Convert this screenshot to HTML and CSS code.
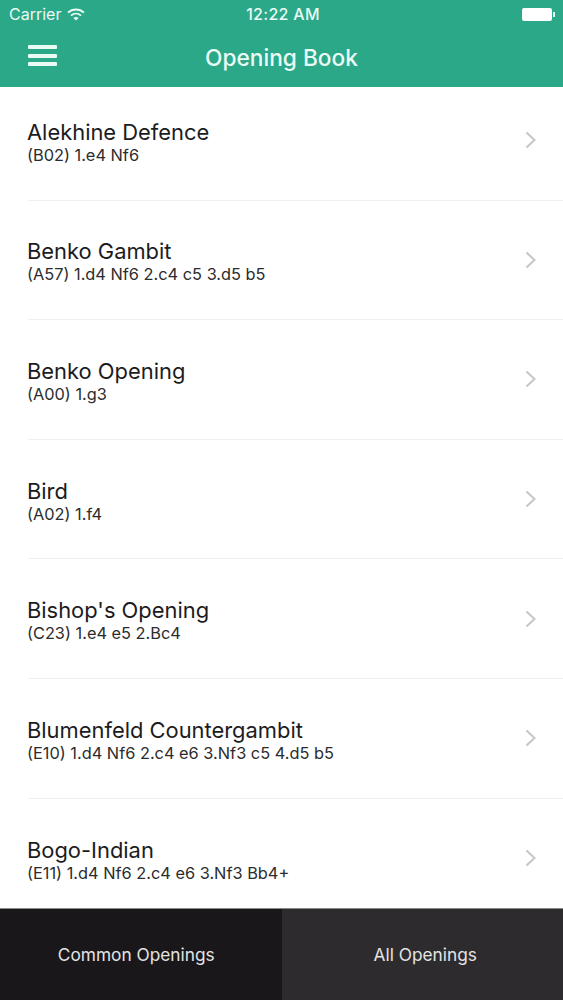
FILE: index.html
```html
<!DOCTYPE html>
<html>
  <head>
    <meta charset="utf-8" />
    <meta name="viewport" content="width=device-width, initial-scale=1.0" />
    <title>Opening Book</title>
    <link rel="stylesheet" href="styles.css">
  </head>
  <body>
    <div class="app">
      <div class="header">
        <div class="status-bar">
          <div class="status-left">
            <span>Carrier</span>
            <svg class="wifi" viewBox="0 0 18 13" width="18" height="13">
              <path d="M1 4.6C5.6 .4 12.4 .4 17 4.6" fill="none" stroke="#eafaf5" stroke-width="1.9"/>
              <path d="M4 7.6C6.9 5 11.1 5 14 7.6" fill="none" stroke="#eafaf5" stroke-width="1.9"/>
              <path d="M6.4 10C8 8.6 10 8.6 11.6 10L9 12.6Z" fill="#eafaf5"/>
            </svg>
          </div>
          <div class="status-time">12:22 AM</div>
          <div class="battery"><span class="battery-body"></span><span class="battery-tip"></span></div>
        </div>
        <div class="nav-bar">
          <div class="menu-icon"><span></span><span></span><span></span></div>
          <div class="nav-title">Opening Book</div>
        </div>
      </div>

      <div class="list">
        <div class="row">
          <div class="row-text">
            <div class="row-title">Alekhine Defence</div>
            <div class="row-moves">(B02) 1.e4 Nf6</div>
          </div>
          <svg class="chevron" viewBox="0 0 11 18" width="11" height="18"><path d="M1.5 1.5L9.5 9l-8 7.5" fill="none" stroke="#c8c8c8" stroke-width="2.2"/></svg>
        </div>
        <div class="row">
          <div class="row-text">
            <div class="row-title">Benko Gambit</div>
            <div class="row-moves">(A57) 1.d4 Nf6 2.c4 c5 3.d5 b5</div>
          </div>
          <svg class="chevron" viewBox="0 0 11 18" width="11" height="18"><path d="M1.5 1.5L9.5 9l-8 7.5" fill="none" stroke="#c8c8c8" stroke-width="2.2"/></svg>
        </div>
        <div class="row">
          <div class="row-text">
            <div class="row-title">Benko Opening</div>
            <div class="row-moves">(A00) 1.g3</div>
          </div>
          <svg class="chevron" viewBox="0 0 11 18" width="11" height="18"><path d="M1.5 1.5L9.5 9l-8 7.5" fill="none" stroke="#c8c8c8" stroke-width="2.2"/></svg>
        </div>
        <div class="row">
          <div class="row-text">
            <div class="row-title">Bird</div>
            <div class="row-moves">(A02) 1.f4</div>
          </div>
          <svg class="chevron" viewBox="0 0 11 18" width="11" height="18"><path d="M1.5 1.5L9.5 9l-8 7.5" fill="none" stroke="#c8c8c8" stroke-width="2.2"/></svg>
        </div>
        <div class="row">
          <div class="row-text">
            <div class="row-title">Bishop's Opening</div>
            <div class="row-moves">(C23) 1.e4 e5 2.Bc4</div>
          </div>
          <svg class="chevron" viewBox="0 0 11 18" width="11" height="18"><path d="M1.5 1.5L9.5 9l-8 7.5" fill="none" stroke="#c8c8c8" stroke-width="2.2"/></svg>
        </div>
        <div class="row">
          <div class="row-text">
            <div class="row-title">Blumenfeld Countergambit</div>
            <div class="row-moves">(E10) 1.d4 Nf6 2.c4 e6 3.Nf3 c5 4.d5 b5</div>
          </div>
          <svg class="chevron" viewBox="0 0 11 18" width="11" height="18"><path d="M1.5 1.5L9.5 9l-8 7.5" fill="none" stroke="#c8c8c8" stroke-width="2.2"/></svg>
        </div>
        <div class="row">
          <div class="row-text">
            <div class="row-title">Bogo-Indian</div>
            <div class="row-moves">(E11) 1.d4 Nf6 2.c4 e6 3.Nf3 Bb4+</div>
          </div>
          <svg class="chevron" viewBox="0 0 11 18" width="11" height="18"><path d="M1.5 1.5L9.5 9l-8 7.5" fill="none" stroke="#c8c8c8" stroke-width="2.2"/></svg>
        </div>
      </div>

      <div class="tabs">
        <div class="tab tab-active">Common Openings</div>
        <div class="tab tab-all">All Openings</div>
      </div>
    </div>
  </body>
</html>
```

FILE: styles.css
```css
html, body {
  margin: 0;
  padding: 0;
}

body {
  font-family: Inter, "Liberation Sans", sans-serif;
  background-color: #ffffff;
}

.app {
  display: flex;
  flex-direction: column;
  height: 1000px;
  overflow: hidden;
}

.header {
  flex: none;
  height: 87px;
  background-color: #2aa888;
  color: #eafaf5;
}

.status-bar {
  display: flex;
  align-items: center;
  justify-content: space-between;
  height: 28px;
  padding: 0 8px 0 9px;
  font-size: 16px;
}

.status-left {
  display: flex;
  align-items: center;
  gap: 6px;
  width: 120px;
}

.status-time {
  font-weight: 500;
  letter-spacing: 0.3px;
  margin-left: 2px;
}

.battery {
  display: flex;
  align-items: center;
  justify-content: flex-end;
  width: 120px;
}

.battery-body {
  width: 30px;
  height: 13px;
  border-radius: 2px;
  background-color: #ffffff;
}

.battery-tip {
  width: 2px;
  height: 5px;
  margin-left: 1px;
  background-color: #eafaf5;
}

.nav-bar {
  position: relative;
  display: flex;
  align-items: center;
  justify-content: center;
  height: 59px;
}

.menu-icon {
  position: absolute;
  left: 28px;
  top: 17px;
  display: flex;
  flex-direction: column;
  gap: 4.5px;
}

.menu-icon span {
  display: block;
  width: 29px;
  height: 4px;
  border-radius: 1px;
  background-color: #eafaf5;
}

.nav-title {
  font-size: 22.7px;
  font-weight: 500;
  margin-top: -1px;
}

.list {
  flex: 1;
  overflow: hidden;
}

.row {
  box-sizing: border-box;
  display: flex;
  align-items: center;
  justify-content: space-between;
  height: 119.6px;
  margin-left: 28px;
  padding-right: 27px;
  padding-top: 4px;
  border-bottom: 1px solid #f0f0f0;
}

.row:first-child {
  height: 113.6px;
  padding-top: 0;
  padding-bottom: 2px;
}

.row:last-child {
  border-bottom: none;
}

.row-text {
  margin-left: -1px;
}

.chevron {
  margin-bottom: 4px;
}

.row:first-child .chevron {
  margin-bottom: 5px;
}

.row-title {
  font-size: 21.9px;
  line-height: 26px;
  color: #1c1c1e;
}

.row-moves {
  font-size: 16.35px;
  line-height: 21px;
  color: #2c2c2e;
}

.tabs {
  flex: none;
  display: flex;
  height: 91px;
  border-top: 1px solid #8a8a8a;
}

.tab {
  box-sizing: border-box;
  flex: 0 0 50%;
  display: flex;
  align-items: center;
  justify-content: center;
  background-color: #2d2b2e;
  color: #e4e4e4;
  font-size: 17.3px;
}

.tab-active {
  background-color: #19171a;
  padding-right: 9px;
}

.tab-all {
  padding-left: 6px;
}
```
